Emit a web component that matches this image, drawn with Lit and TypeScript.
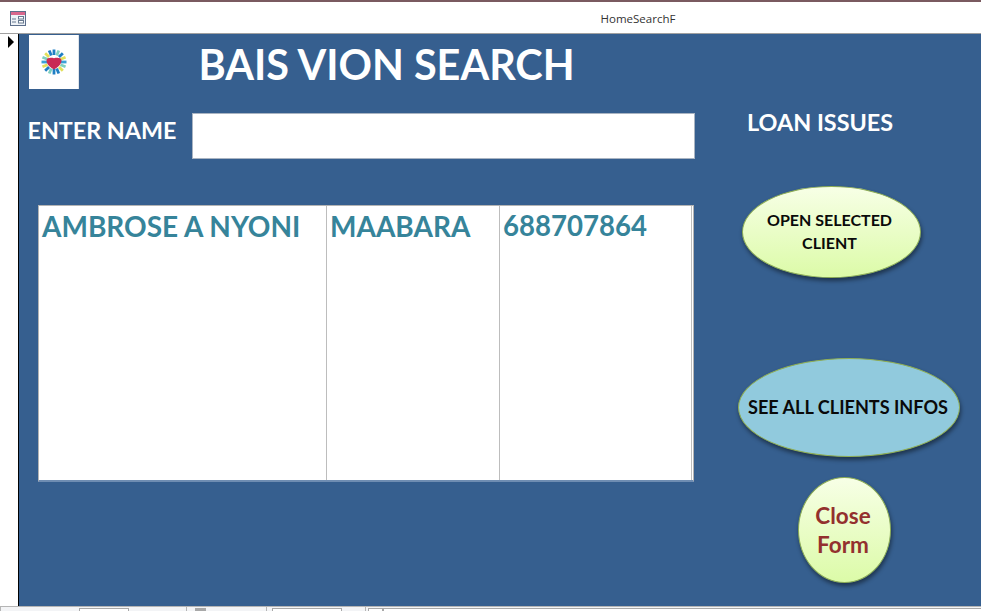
import { LitElement, html, css, svg } from "lit";
import { customElement } from "lit/decorators.js";

const colors = ["#1f7fc4", "#7fd0c0", "#1f7fc4", "#e3e05a", "#3aa0d8", "#7fd0c0", "#e3e05a", "#1f7fc4"];
const rays = Array.from({ length: 16 }, (_, i) =>
  svg`<line x1="0" y1="-7" x2="0" y2="-12.5" stroke=${colors[i % 8]} stroke-width="2.8" transform="rotate(${i * 22.5})"></line>`
);

@customElement("app-root")
export class AppRoot extends LitElement {
  static styles = css`
    :host { display: block; width: 981px; height: 611px; overflow: hidden; background: #fff; font-family: Lato, "Open Sans", sans-serif; }
    .titlebar { height: 31px; border-top: 2px solid #7a5a60; border-bottom: 1px solid #a0a0a0; background: #fff; display: flex; align-items: center; }
    .ticon { margin: 2px 0 0 10px; flex: none; }
    .ttext { flex: 1; text-align: center; font: 11.5px "Open Sans", sans-serif; color: #333; margin-left: 269px; margin-top: 2px; }
    .middle { display: flex; height: 572px; }
    .selector { width: 18px; flex: none; border-right: 1px solid #000; background: #fff; padding-top: 2px; height: 570px; }
    .arrow { display: block; margin-left: 8px; width: 0; height: 0; border-left: 6px solid #000; border-top: 6px solid transparent; border-bottom: 6px solid transparent; }
    .form { flex: 1; background: #365f8f; display: flex; }
    .left { width: 719px; flex: none; }
    .head { display: flex; height: 56px; padding: 1px 0 0 10px; }
    .logo { width: 50px; height: 54px; background: #fff; display: flex; align-items: center; justify-content: center; border-right: 1px solid #dfe4ea; box-sizing: border-box; }
    h1 { margin: 0 0 0 119.5px; color: #fff; font-size: 41.4px; line-height: 58px; font-weight: 700; white-space: nowrap; }
    .namerow { display: flex; align-items: center; margin-top: 22px; padding-left: 8.5px; }
    .namelabel { color: #fff; font-size: 23.3px; font-weight: 700; width: 164.5px; flex: none; margin-bottom: 13px; white-space: nowrap; }
    .nameinput { width: 503px; height: 46px; box-sizing: border-box; background: #fff; border: 1px solid #a9b4c2; }
    .list { margin: 46px 0 0 19px; width: 656px; height: 277px; box-sizing: border-box; background: #fff; border: 1px solid #b4b4b4; border-bottom: 2px solid #6f8db2; padding-right: 1px; display: grid; grid-template-columns: 288px 173px 1fr; }
    .cell { border-right: 1px solid #bdbdbd; color: #36849a; font-size: 28px; font-weight: 700; padding: 2px 0 0 3px; line-height: 36px; white-space: nowrap; }
    .num { font-size: 27.6px; }
    .right { flex: 1; display: flex; flex-direction: column; align-items: flex-start; }
    .loan { color: #fff; font-size: 23.4px; font-weight: 700; margin: 73px 0 0 9px; line-height: 30px; white-space: nowrap; }
    .oval { box-sizing: border-box; border-radius: 50%; border: 1px solid #8fae55; box-shadow: 1px 3px 4px rgba(0,0,0,.45); display: flex; align-items: center; justify-content: center; text-align: center; font-weight: 700; }
    .green { background: linear-gradient(#f7ffe6, #dcfba8); }
    .o1 { width: 179px; height: 92px; margin: 49px 0 0 4px; color: #0a0a0a; font-size: 16px; line-height: 23px; padding: 0 4px 2px 0; }
    .o2 { width: 222px; height: 99px; margin: 80px 0 0 0; background: #91cadd; color: #0a0a0a; font-size: 18.1px; white-space: nowrap; padding: 0 2px 1px 0; }
    .o3 { width: 93px; height: 106px; margin: 20px 0 0 60px; color: #93302e; font-size: 22.5px; line-height: 29px; padding-right: 3px; }
    .bottom { height: 4px; border-top: 1px solid #b5b5b5; background: #f3f4f6; display: flex; }
    .seg { box-sizing: border-box; height: 4px; flex: none; }
    .s1 { width: 187px; border-left: 1px solid #b5b5b5; border-right: 1px solid #b5b5b5; padding: 1px 0 0 78px; }
    .s2 { width: 80px; border-right: 1px solid #b5b5b5; padding: 1px 0 0 8px; }
    .s3 { width: 99px; border-right: 1px solid #b5b5b5; padding: 1px 0 0 5px; }
    .s4 { flex: 1; padding: 1px 0 0 2px; display: flex; }
    .tab { height: 3px; box-sizing: border-box; border: 1px solid #a8a8a8; border-bottom: 0; background: #fff; }
    .t1 { width: 50px; }
    .t2 { width: 11px; background: #a8a8a8; }
    .t3 { width: 70px; }
    .t4 { width: 15px; }
    .t5 { flex: 1; border-right: 0; }
  `;

  render() {
    return html`
      <div class="titlebar">
        <svg class="ticon" width="16" height="15" viewBox="0 0 16 15">
          <rect x=".5" y=".5" width="15" height="14" fill="#eef2f7" stroke="#5d6f8c"></rect>
          <rect x="1" y="1" width="14" height="3" fill="#d9668c"></rect>
          <path d="M2 8h4M2 11h4" stroke="#66788f" fill="none"></path>
          <rect x="8.5" y="5.5" width="5" height="2.5" fill="#fff" stroke="#66788f"></rect>
          <rect x="8.5" y="9.5" width="5" height="2.5" fill="#fff" stroke="#66788f"></rect>
        </svg>
        <div class="ttext">HomeSearchF</div>
      </div>
      <div class="middle">
        <div class="selector"><span class="arrow"></span></div>
        <div class="form">
          <div class="left">
            <div class="head">
              <div class="logo">
                <svg width="28" height="28" viewBox="-14 -14 28 28">
                  ${rays}
                  <path d="M0 7.5 C-3 5.5 -7.5 3 -7.5 -1.5 C-7.5 -4.5 -3 -4.5 0 -3.8 C3 -4.5 7.5 -4.5 7.5 -1.5 C7.5 3 3 5.5 0 7.5Z" fill="#c92a55"></path>
                </svg>
              </div>
              <h1>BAIS VION SEARCH</h1>
            </div>
            <div class="namerow">
              <div class="namelabel">ENTER NAME</div>
              <div class="nameinput"></div>
            </div>
            <div class="list">
              <div class="cell">AMBROSE A NYONI</div>
              <div class="cell">MAABARA</div>
              <div class="cell num">688707864</div>
            </div>
          </div>
          <div class="right">
            <div class="loan">LOAN ISSUES</div>
            <div class="oval green o1">OPEN SELECTED<br />CLIENT</div>
            <div class="oval o2">SEE ALL CLIENTS INFOS</div>
            <div class="oval green o3">Close<br />Form</div>
          </div>
        </div>
      </div>
      <div class="bottom">
        <div class="seg s1"><div class="tab t1"></div></div>
        <div class="seg s2"><div class="tab t2"></div></div>
        <div class="seg s3"><div class="tab t3"></div></div>
        <div class="seg s4"><div class="tab t4"></div><div class="tab t5"></div></div>
      </div>
    `;
  }
}
